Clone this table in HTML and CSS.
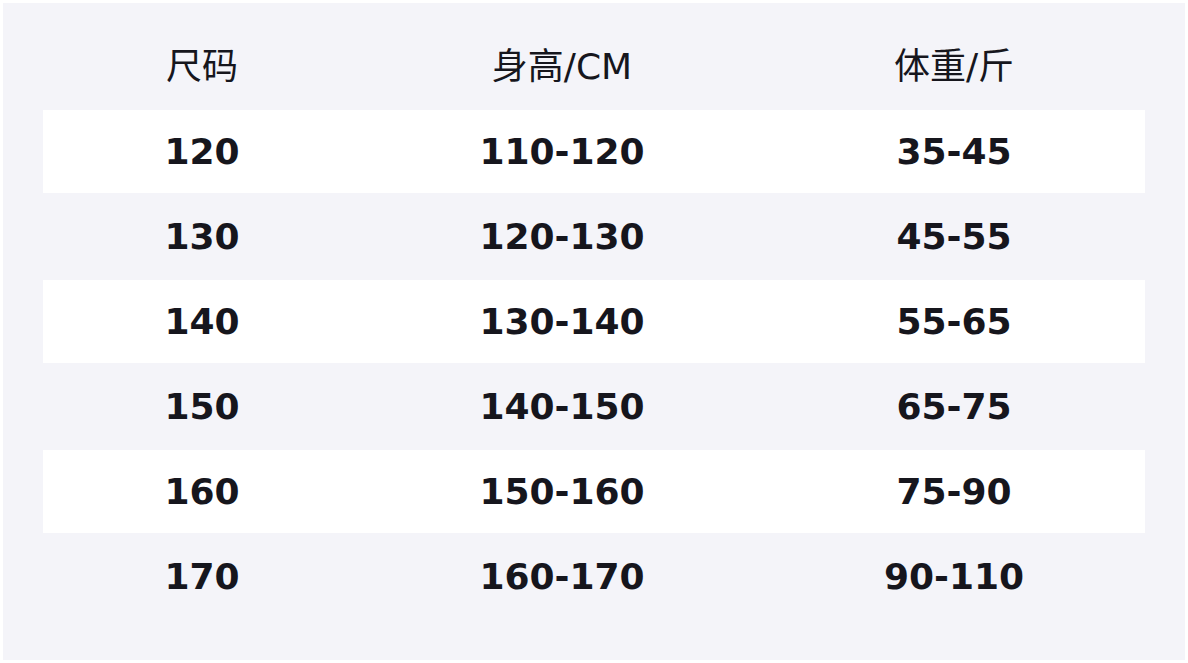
FILE: index.html
```html
<!DOCTYPE html>
<html lang="zh">
<head>
<meta charset="utf-8">
<title>尺码表</title>
<link rel="stylesheet" href="styles.css">
</head>
<body>
<div class="panel">
  <div class="row head">
    <div class="cell">尺码</div>
    <div class="cell">身高/CM</div>
    <div class="cell">体重/斤</div>
  </div>
  <div class="row light"><div class="cell">120</div><div class="cell">110-120</div><div class="cell">35-45</div></div>
  <div class="row"><div class="cell">130</div><div class="cell">120-130</div><div class="cell">45-55</div></div>
  <div class="row light"><div class="cell">140</div><div class="cell">130-140</div><div class="cell">55-65</div></div>
  <div class="row"><div class="cell">150</div><div class="cell">140-150</div><div class="cell">65-75</div></div>
  <div class="row light"><div class="cell">160</div><div class="cell">150-160</div><div class="cell">75-90</div></div>
  <div class="row"><div class="cell">170</div><div class="cell">160-170</div><div class="cell">90-110</div></div>
</div>
</body>
</html>
```
FILE: styles.css
```css
html, body {
  margin: 0;
  padding: 0;
  background: #ffffff;
}
body {
  padding: 3px;
  font-family: "DejaVu Sans", "Noto Sans CJK SC", sans-serif;
  color: #16161d;
}
.panel {
  background: #f4f4f9;
  height: 657px;
  box-sizing: border-box;
  padding: 22px 40px 42px;
  display: flex;
  flex-direction: column;
  gap: 2px;
}
.row {
  display: grid;
  grid-template-columns: 318px 402px 382px;
  height: 83px;
  align-items: center;
  font-size: 36px;
  font-weight: bold;
}
.row.light {
  background: #ffffff;
}
.row.head {
  font-weight: normal;
}
.cell {
  text-align: center;
  line-height: 1;
}
```
